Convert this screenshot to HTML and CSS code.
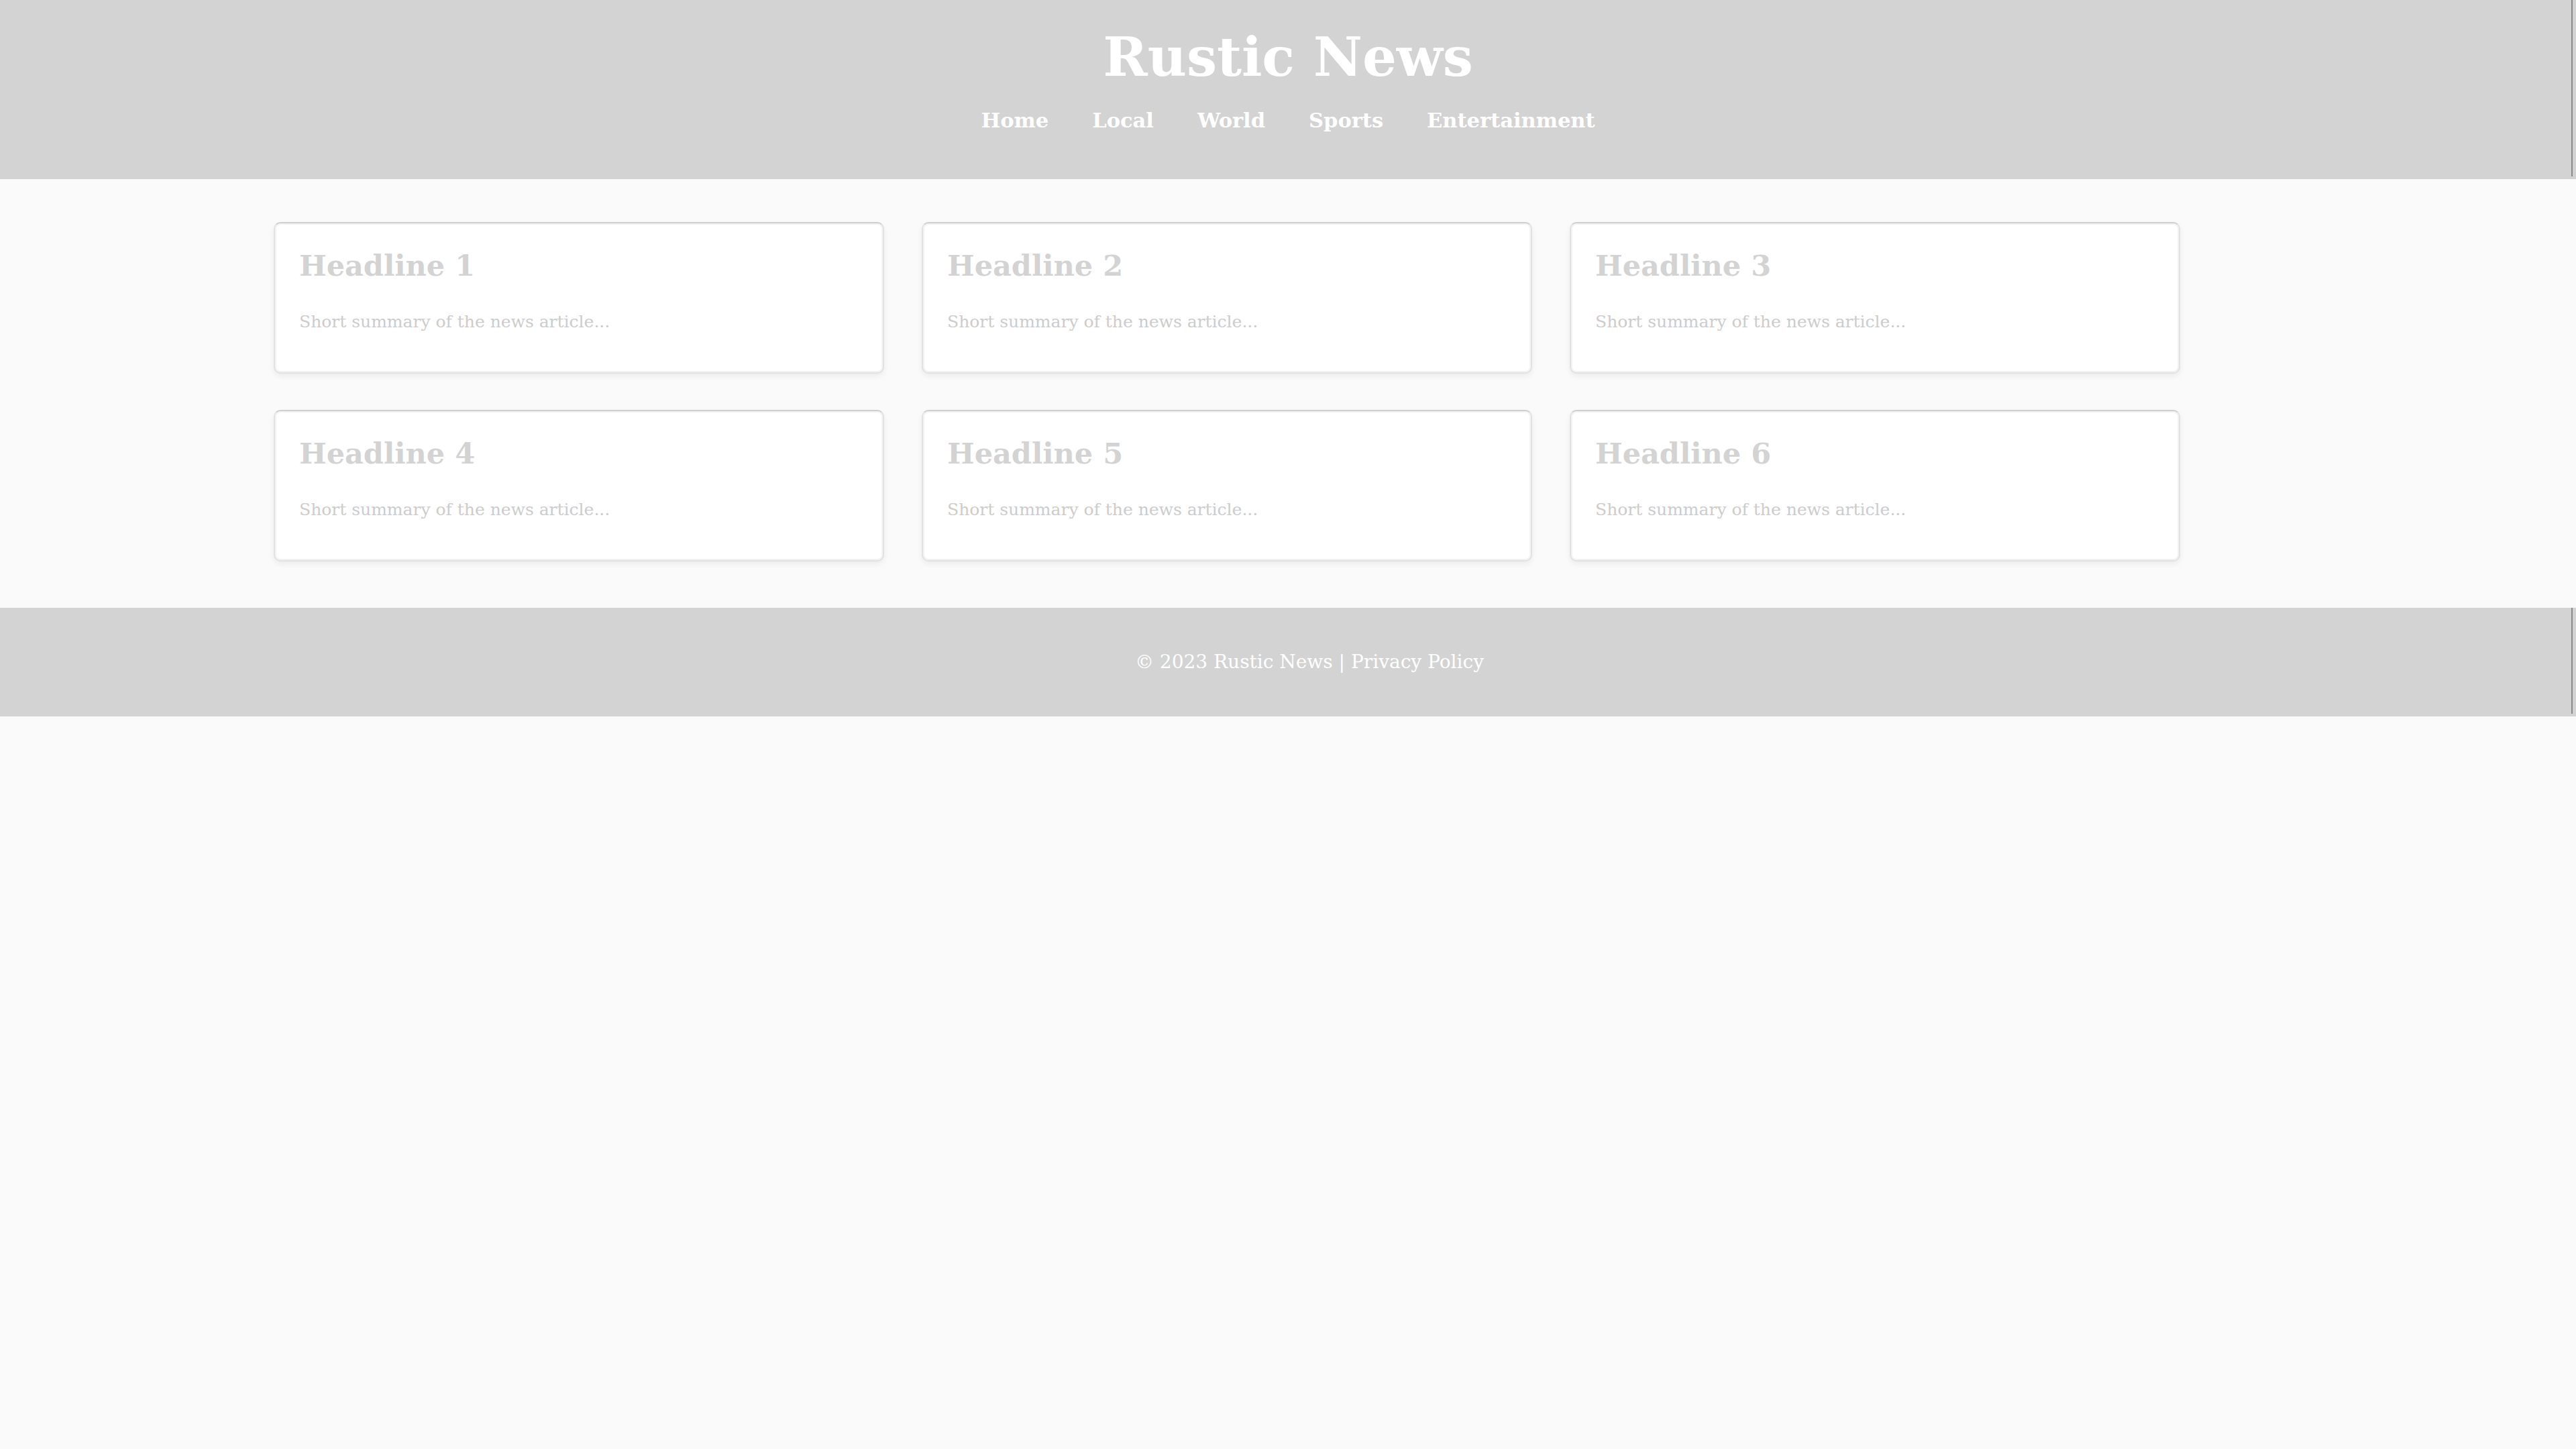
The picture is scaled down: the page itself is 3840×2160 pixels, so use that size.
FILE: index.html
```html
<!DOCTYPE html>
<html lang="en">
<head>
<meta charset="utf-8">
<title>Rustic News</title>
<link rel="stylesheet" href="styles.css">
</head>
<body>
<header class="site-header">
  <h1 class="site-title">Rustic News</h1>
  <nav class="site-nav">
    <a href="#">Home</a>
    <a href="#">Local</a>
    <a href="#">World</a>
    <a href="#">Sports</a>
    <a href="#">Entertainment</a>
  </nav>
</header>
<main class="news">
  <div class="news-grid">
    <article class="card"><h2 class="card-title">Headline 1</h2><p class="card-text">Short summary of the news article...</p></article>
    <article class="card"><h2 class="card-title">Headline 2</h2><p class="card-text">Short summary of the news article...</p></article>
    <article class="card"><h2 class="card-title">Headline 3</h2><p class="card-text">Short summary of the news article...</p></article>
    <article class="card"><h2 class="card-title">Headline 4</h2><p class="card-text">Short summary of the news article...</p></article>
    <article class="card"><h2 class="card-title">Headline 5</h2><p class="card-text">Short summary of the news article...</p></article>
    <article class="card"><h2 class="card-title">Headline 6</h2><p class="card-text">Short summary of the news article...</p></article>
  </div>
</main>
<footer class="site-footer">
  <p class="footer-text">© 2023 Rustic News | <a href="#">Privacy Policy</a></p>
</footer>
</body>
</html>
```
FILE: styles.css
```css
html, body {
  margin: 0;
  padding: 0;
}
body {
  background: #fafafa;
  font-family: Georgia, "DejaVu Serif", serif;
  color: #d3d3d3;
}
a {
  color: inherit;
  text-decoration: none;
}
.site-header {
  position: relative;
  background: #d3d3d3;
  color: #ffffff;
  text-align: center;
  padding: 39px 0 70px;
}
.site-header::after,
.site-footer::after {
  content: "";
  position: absolute;
  top: 0;
  bottom: 4px;
  right: 5px;
  width: 2px;
  background: #8a8a8a;
}
.site-title {
  margin: 0;
  font-size: 80px;
  line-height: 93px;
  font-weight: bold;
}
.site-nav {
  margin-top: 29px;
  display: flex;
  justify-content: center;
  gap: 65px;
  font-size: 30.5px;
  line-height: 36px;
  font-weight: bold;
}
.news {
  padding: 64px 0 69px;
}
.news-grid {
  width: 2842px;
  margin-left: 408px;
  display: grid;
  grid-template-columns: repeat(3, 910px);
  column-gap: 56px;
  row-gap: 54px;
}
.card {
  box-sizing: border-box;
  background: #ffffff;
  border: 2px solid #e2e2e2;
  border-top-color: #cfcfcf;
  border-radius: 10px;
  box-shadow: 0 4px 8px rgba(0, 0, 0, 0.06), inset 0 0 0 2px #f3f3f3;
  padding: 37px 36px 59px;
}
.card-title {
  margin: 0 0 42px;
  font-size: 43px;
  line-height: 52px;
  font-weight: bold;
  color: #d3d3d3;
}
.card-text {
  margin: 0;
  font-size: 25px;
  line-height: 32px;
  color: #cccccc;
}
.site-footer {
  position: relative;
  background: #d3d3d3;
  color: #ffffff;
  text-align: center;
  padding: 66px 0 66px 64px;
}
.footer-text {
  margin: 0;
  font-size: 28px;
  line-height: 30px;
}
```
